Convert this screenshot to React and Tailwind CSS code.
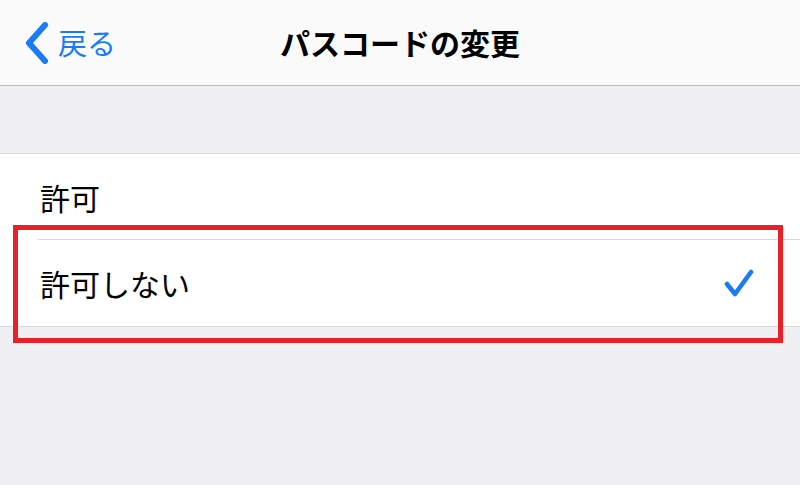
export default function App() {
  return (
    <div
      className="relative w-[800px] h-[485px] overflow-hidden bg-[#efeff4] flex flex-col"
      style={{ fontFamily: '"Noto Sans CJK JP", "Noto Sans", sans-serif' }}
    >
      {/* Nav bar */}
      <div className="h-[86px] bg-[#fafafa] border-b border-[#b8b8bc] flex items-center relative">
        <div className="flex items-center pl-[24px] text-[#1a7cf5]">
          <svg width="26" height="42" viewBox="0 0 26 42" className="mt-[1px]">
            <path d="M21 3 L5 21 L21 39" fill="none" stroke="#1a7cf5" strokeWidth="6" strokeLinecap="round" strokeLinejoin="round" />
          </svg>
          <span className="text-[29px] leading-none ml-[8px] -mt-[1px]">戻る</span>
        </div>
        <div className="absolute inset-0 flex items-center justify-center pointer-events-none">
          <span className="text-[30px] font-bold text-black leading-none -mt-[1px]">パスコードの変更</span>
        </div>
      </div>

      {/* Spacer */}
      <div className="h-[67px]" />

      {/* List */}
      <div className="bg-white border-t border-b border-[#d8d8dc]">
        <div className="h-[85px] flex items-center pl-[40px]">
          <span className="text-[30px] text-black leading-none">許可</span>
        </div>
        <div className="ml-[38px] h-px bg-[#d8d8dc]" />
        <div className="h-[86px] flex items-center justify-between pl-[40px] pr-[46px]">
          <span className="text-[30px] text-black leading-none">許可しない</span>
          <svg width="30" height="30" viewBox="0 0 30 30">
            <path d="M3 16 L11 26 L27 4" fill="none" stroke="#1a7cf5" strokeWidth="4.6" strokeLinecap="round" strokeLinejoin="round" />
          </svg>
        </div>
      </div>

      {/* Highlight box */}
      <div className="absolute left-[13px] top-[225px] w-[770px] h-[118px] border-[5px] border-[#e8202a]" />
    </div>
  )
}
